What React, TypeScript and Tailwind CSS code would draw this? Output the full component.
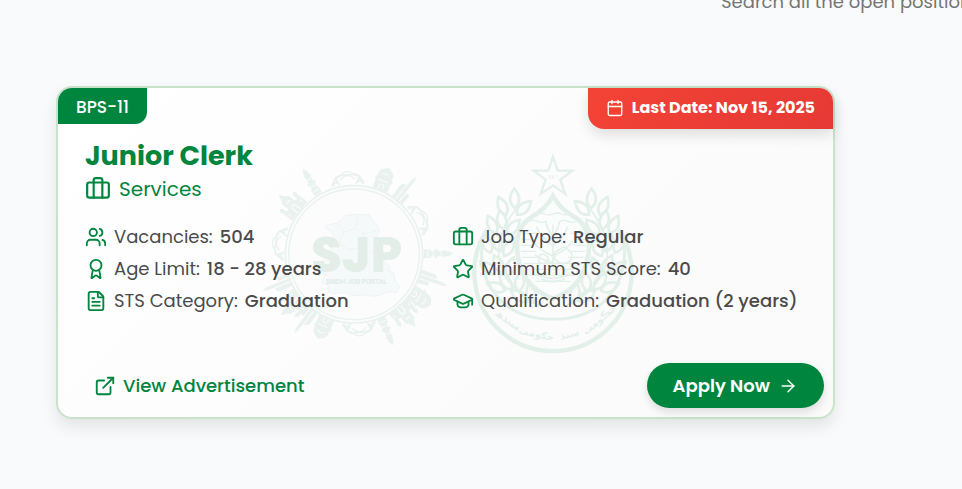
import {
  ArrowRight,
  Award,
  Briefcase,
  Calendar,
  ExternalLink,
  FileText,
  GraduationCap,
  Star,
  Users,
} from 'lucide-react'

const details = [
  { icon: Users, label: 'Vacancies:', value: '504' },
  { icon: Briefcase, label: 'Job Type:', value: 'Regular' },
  { icon: Award, label: 'Age Limit:', value: '18 - 28 years' },
  { icon: Star, label: 'Minimum STS Score:', value: '40' },
  { icon: FileText, label: 'STS Category:', value: 'Graduation' },
  { icon: GraduationCap, label: 'Qualification:', value: 'Graduation (2 years)' },
]

// landmarks standing around the ring, each drawn upright at the top of the circle
const Minaret = ({ angle }: { angle: number }) => (
  <g transform={`rotate(${angle} 312 323)`}>
    <path d="M299 114V94h4V80h-5v-7h6V56l-4-4 5-6V34h3l4-10 4 10h3v12l5 6-4 4v17h6v7h-5v14h4v20z" />
    <path d="M305 62h14M304 86h16M302 102h20" stroke="#fbfcfc" strokeWidth="3" />
  </g>
)

const Fort = ({ angle }: { angle: number }) => (
  <g transform={`rotate(${angle} 312 323)`}>
    <path d="M276 116V76h-5l9-12 9 12h-3v10h10V62l6-6 10-20 10 20 6 6v24h10V76h-3l9-12 9 12h-5v40z" />
    <path
      d="M305 114V94q7-10 14 0v20M284 104v-8M340 104v-8M304 72h16"
      fill="none"
      stroke="#fbfcfc"
      strokeWidth="4"
    />
  </g>
)

const Dome = ({ angle }: { angle: number }) => (
  <g transform={`rotate(${angle} 312 323)`}>
    <path d="M288 116V88h-4v-8h5q-3-22 12-28l11-6 11 6q15 6 12 28h5v8h-4v28z" />
    <path
      d="M296 88h32M305 114v-12q7-8 14 0v12M300 70q12-8 24 0"
      fill="none"
      stroke="#fbfcfc"
      strokeWidth="3"
    />
  </g>
)

const Tower = ({ angle }: { angle: number }) => (
  <g transform={`rotate(${angle} 312 323)`}>
    <path d="M291 116V72l8-8h5v52zM307 116V44l4-18 6 14v76zM320 116V82h12v34z" />
  </g>
)

const Bridge = ({ angle }: { angle: number }) => (
  <g transform={`rotate(${angle} 312 323)`} fill="none" stroke="currentColor">
    <path d="M268 116q6-30 22-30h44q16 0 22 30" strokeWidth="5" />
    <path d="M284 92q28-32 56 0M290 100q22-24 44 0" strokeWidth="4" />
    <path
      d="M262 116l14-24 12 24M336 116l12-24 14 24M270 108h16M340 108h16M274 98l10 14M350 98l-10 14"
      strokeWidth="4"
    />
  </g>
)

const PortalLogo = () => (
  <svg
    viewBox="0 0 600 642"
    className="w-[200px] shrink-0 overflow-visible text-[#e9f2ee]"
    fill="currentColor"
    aria-hidden="true"
  >
    <Bridge angle={-5} />
    <Dome angle={22} />
    <Tower angle={39} />
    <Bridge angle={62} />
    <Minaret angle={90} />
    <Tower angle={109} />
    <Dome angle={124} />
    <Fort angle={140} />
    <Minaret angle={157} />
    <Bridge angle={176} />
    <Dome angle={203} />
    <Tower angle={217} />
    <Fort angle={230} />
    <Tower angle={248} />
    <Bridge angle={278} />
    <Fort angle={308} />
    <Minaret angle={329} />
    <circle cx="312" cy="325" r="206" fill="#fcfcfc" stroke="currentColor" strokeWidth="5" />
    <circle cx="312" cy="325" r="196" fill="none" stroke="currentColor" strokeWidth="4" />
    <path
      d="M234 236l28-5 24-22 34-4 38 2 14 20 16 22-8 26 6 30 12 34 20 20-2 14 16 8 4 26 14 14-12 20-24-4-20 10-22 4-30-4-34 2-26-10-28 4-18-4-2-22-20-6 14-26-24 4 14-12-2-24 22-38 14-34-6-24-22-12z"
      fill="#f6f9f9"
      stroke="currentColor"
      strokeWidth="2"
    />
    <path
      d="M262 232l20 26 34-10 26 16 36-10M282 258l-14 32 26 20 36-4 22 16 38-12M316 248l8-42M342 264l-12 42"
      fill="none"
      stroke="currentColor"
      strokeWidth="2"
    />
    <text
      x="320"
      y="379"
      textAnchor="middle"
      className="font-['Poppins','Inter'] text-[148px] font-extrabold"
      fill="#e3eee9"
    >
      SJP
    </text>
    <text
      x="319"
      y="413"
      textAnchor="middle"
      className="font-['Inter'] text-[19px] font-bold"
      fill="#e1e9e9"
    >
      SINDH JOB PORTAL
    </text>
  </svg>
)

// a single grain of wheat, pointing up from the stem
const leafPath = 'M0 0Q-30-20-6-58Q24-26 0 0Z'

const leaves = [
  [180, 186, 4],
  [186, 206, 52],
  [154, 206, -18],
  [146, 250, -6],
  [156, 266, 46],
  [124, 262, -20],
  [136, 316, -12],
  [148, 330, 34],
  [108, 320, -18],
  [144, 380, -22],
  [158, 390, 24],
  [120, 384, -44],
  [170, 430, -32],
  [190, 436, 14],
  [150, 434, -62],
  [216, 466, -50],
  [234, 470, -6],
]

const Wreath = () => (
  <g fill="none" stroke="currentColor" strokeWidth="8">
    <path d="M182 190Q100 300 150 390Q190 456 262 482" strokeWidth="5" />
    {leaves.map(([x, y, angle]) => (
      <path key={`${x}/${y}`} d={leafPath} transform={`translate(${x} ${y}) rotate(${angle})`} />
    ))}
  </g>
)

const SindhEmblem = () => (
  <svg
    viewBox="-15 0 573 642"
    className="w-[191px] shrink-0 overflow-visible text-[#e3f0ea]"
    fill="none"
    stroke="currentColor"
    aria-hidden="true"
  >
    <path
      d="M294 32l14 42h44l-36 27 15 43-37-26-37 26 15-43-36-27h44z"
      strokeWidth="7"
    />
    <text
      x="294"
      y="98"
      textAnchor="middle"
      className="font-['DejaVu_Sans'] text-[19px]"
      fill="currentColor"
      stroke="none"
    >
      ٧٨٦
    </text>
    <path d="M96 251A236 236 0 1 0 492 251" strokeWidth="13" />
    <path d="M96 251Q64 318 94 398Q146 520 294 520Q442 520 494 398Q524 318 492 251" strokeWidth="9" />
    <Wreath />
    <g transform="translate(588 0) scale(-1 1)">
      <Wreath />
    </g>
    <path
      d="M294 150Q272 190 228 214Q184 242 186 306Q190 382 236 424Q264 448 294 458Q324 448 352 424Q398 382 402 306Q404 242 360 214Q316 190 294 150Z"
      strokeWidth="14"
      fill="#fbfcfc"
    />
    <path
      d="M244 204q12-6 25 0t25 0 25 0 25 0M222 226q12-6 25 0t25 0M314 226q12-6 25 0t25 0M202 262h42M346 262h44M198 280h38M354 280h38M198 298h38M350 298h42M198 316h46M346 316h46M202 334h50M340 334h46M206 352h176M214 370h160M226 388h136M242 406h104"
      strokeWidth="4"
    />
    <path
      d="M294 366V236M294 300q-36-26-50-58M294 300q34-28 44-58M294 330q-46-20-62-46M294 330q44-20 58-44M294 270q-20-22-22-46M294 270q16-22 20-44M294 350q-36-8-54-24"
      strokeWidth="5"
    />
    <path
      d="M300 340q-6-26 16-30 8-14 20 0 22 10 10 34-22 20-46-4zM252 346q-6-18 12-22 18 4 14 22-12 14-26 0z"
      strokeWidth="5"
    />
    <path d="M244 384q50 26 100 0M258 398q36 18 72 0" strokeWidth="5" />
    <g
      className="font-['DejaVu_Sans'] text-[30px] font-bold"
      textAnchor="middle"
      fill="currentColor"
      stroke="none"
    >
      <text transform="translate(440 528) rotate(-40)">حڪومت</text>
      <text transform="translate(346 574) rotate(-14)">سنڌ</text>
      <text transform="translate(242 574) rotate(12)">حکومت</text>
      <text transform="translate(152 530) rotate(36)">سندھ</text>
    </g>
  </svg>
)

const JobCard = () => (
  <article className="relative rounded-2xl border-2 border-[#c8e3c9] bg-linear-135 from-white to-[#fafafa] shadow-[0_8px_16px_rgba(0,0,0,0.09)]">
    <div className="absolute inset-0 flex items-center justify-center overflow-hidden rounded-2xl">
      <PortalLogo />
      <SindhEmblem />
    </div>

    <div className="relative">
      <div className="flex h-[52px] items-start justify-between">
        <span className="rounded-tl-[14px] rounded-br-xl bg-[#00853f] px-[18px] pt-[7px] pb-[5px] text-[17px] leading-6 font-medium text-white">
          BPS-11
        </span>
        <span className="flex items-center gap-2 rounded-tr-[14px] rounded-bl-2xl bg-linear-135 from-[#f44336] to-[#e53935] px-[18px] pt-[7px] pb-[9px] text-base leading-[25px] font-bold text-white shadow-[0_6px_14px_rgba(0,0,0,0.12)]">
          <Calendar className="h-[18px] w-[18px]" strokeWidth={1.75} />
          Last Date: Nov 15, 2025
        </span>
      </div>

      <div className="px-[27px]">
        <h2 className="text-[27px] leading-8 font-bold text-[#00853f]">Junior Clerk</h2>
        <p className="flex items-center gap-2 text-xl leading-[34px] text-[#00853f]">
          <Briefcase className="h-[26px] w-[26px]" />
          Services
        </p>

        <ul className="mt-[21px] grid grid-cols-2 gap-x-[13px] gap-y-3 text-lg leading-5 text-[#4a4a4a]">
          {details.map(({ icon: Icon, label, value }) => (
            <li className="flex items-center gap-[7px] whitespace-nowrap" key={label}>
              <Icon className="-my-px h-[22px] w-[22px] text-[#00853f]" />
              <span>{label}</span>
              <span className="font-medium">{value}</span>
            </li>
          ))}
        </ul>
      </div>

      <div className="mt-[52px] flex items-center justify-between pr-[9px] pb-[9px] pl-9">
        <a
          href="#advertisement"
          className="flex items-center gap-[7px] text-lg font-medium text-[#00853f]"
        >
          <ExternalLink className="h-[22px] w-[22px]" />
          View Advertisement
        </a>
        <button className="flex h-[45px] items-center gap-2 rounded-full bg-[#00853f] px-[26px] text-lg font-semibold text-white shadow-[0_4px_8px_rgba(0,0,0,0.12)]">
          Apply Now
          <ArrowRight className="h-5 w-5" strokeWidth={1.75} />
        </button>
      </div>
    </div>
  </article>
)

const App = () => {
  return (
    <main className="min-h-screen overflow-hidden bg-[#f9fafc] pr-[127px] pb-[70px] pl-14 font-['Poppins','Inter',sans-serif]">
      <header className="flex h-[86px] items-start">
        <p className="-mt-3 ml-[665px] text-lg leading-7 whitespace-nowrap text-[#757575]">
          Search all the open positions
        </p>
      </header>
      <JobCard />
    </main>
  )
}

export default App
